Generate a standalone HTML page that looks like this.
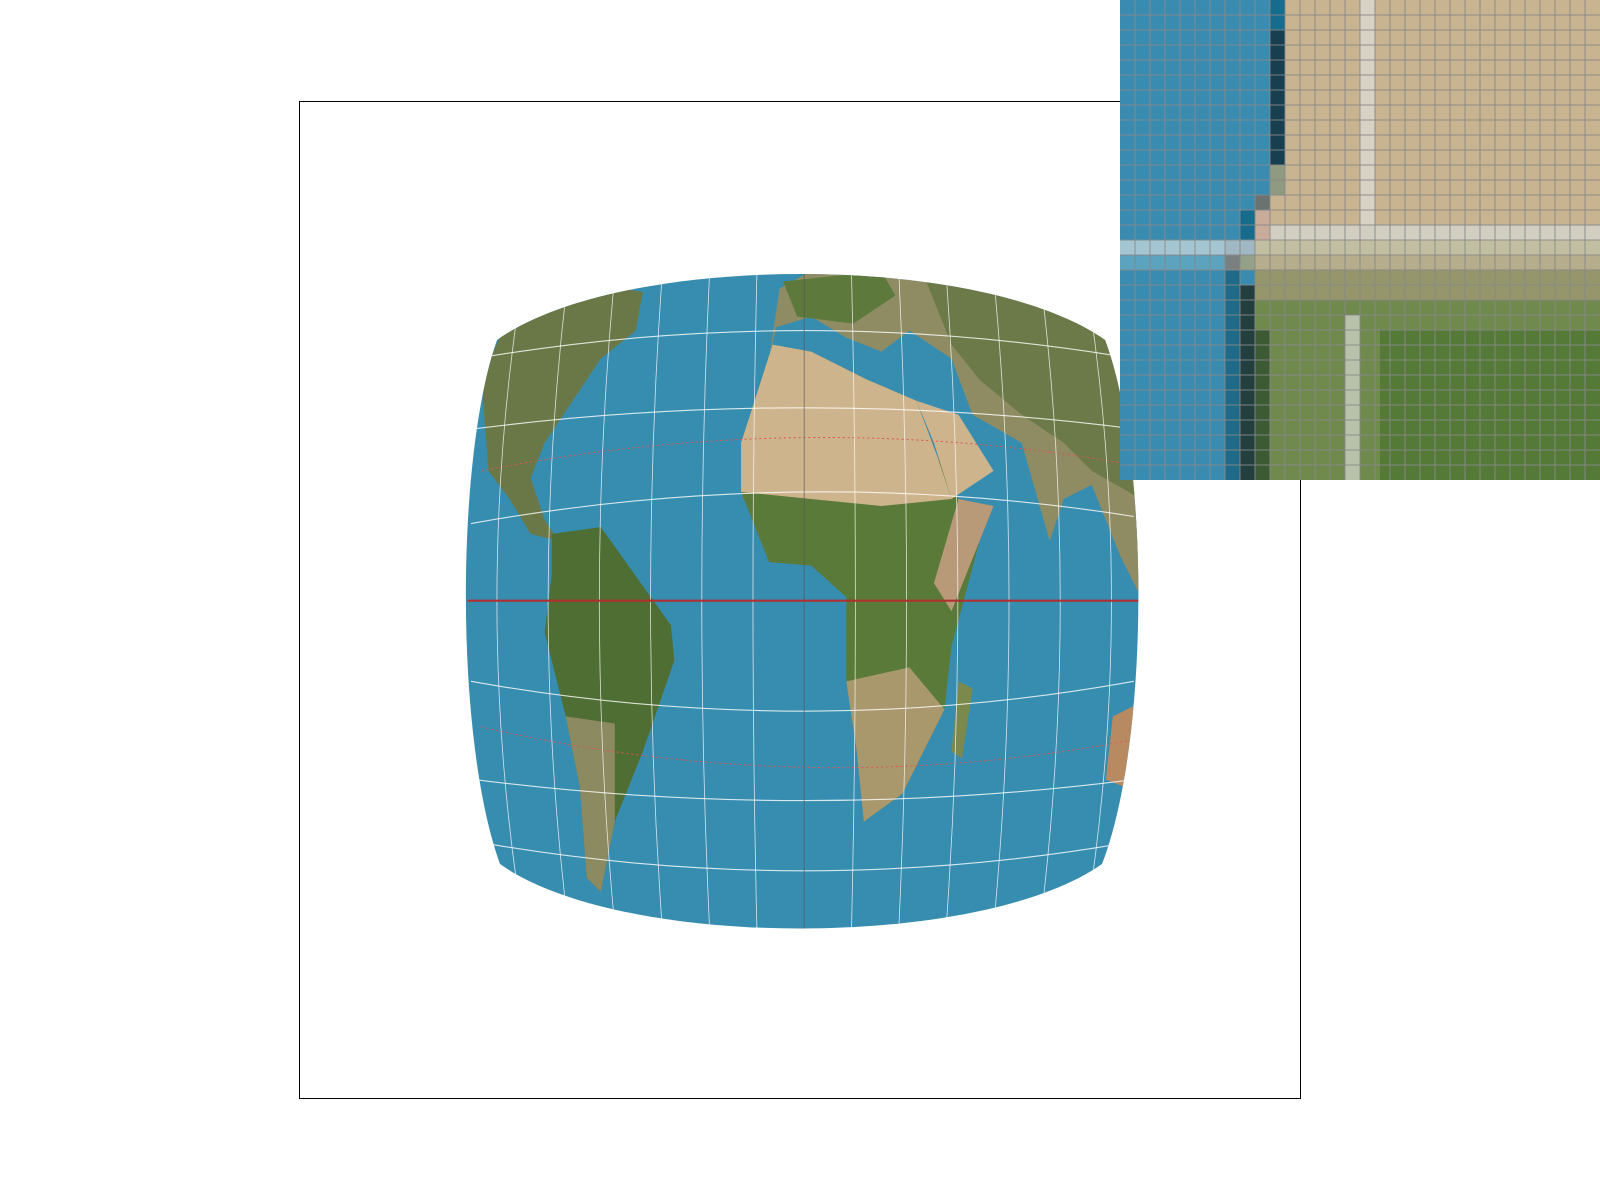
<!DOCTYPE html>
<html><head><meta charset="utf-8"><style>
html,body{margin:0;padding:0;background:#fff;width:1600px;height:1200px;overflow:hidden}
svg{display:block}
</style></head><body>
<svg width="1600" height="1200" viewBox="0 0 1600 1200" xmlns="http://www.w3.org/2000/svg">
<defs>
<clipPath id="g"><path d="M497,340 C620,252 980,252 1105,340 C1150,460 1150,740 1102,864 C980,950 620,950 500,864 C455,740 455,460 497,340 Z"/></clipPath>
</defs>
<rect x="299.5" y="101.5" width="1001" height="997" fill="none" stroke="#000" stroke-width="1"/>
<g clip-path="url(#g)">
<rect x="440" y="240" width="720" height="720" fill="#378db0"/>
<g transform="translate(250,50) scale(0.7015)">
<!-- Eurasia -->
<path d="M740,440 L750,395 L800,380 L850,410 L900,430 L940,400 L1000,440 L1030,520 L1100,560 L1140,700 L1160,640 L1200,620 L1240,720 L1270,780 L1270,300 L1100,320 L950,310 L800,315 L755,340 Z" fill="#8f8c64"/>
<path d="M960,320 L1270,300 L1270,640 L1200,600 L1160,560 L1100,520 L1040,470 L1000,420 Z" fill="#6b7a48"/>
<path d="M760,330 L900,315 L920,350 L860,390 L780,380 Z" fill="#5d7a3c"/>
<!-- Africa -->
<path d="M745,420 L700,560 L700,630 L740,730 L800,735 L850,780 L850,900 L870,1000 L875,1100 L930,1060 L990,940 L1000,850 L1040,700 L1060,650 L1010,640 L980,580 L950,500 L880,470 L800,430 Z" fill="#5a7a3a"/>
<path d="M745,420 L700,560 L700,630 L800,640 L900,650 L1000,640 L980,580 L950,500 L880,470 L800,430 Z" fill="#cdb48c"/>
<path d="M1010,640 L1060,650 L1040,700 L1000,800 L975,760 Z" fill="#b89a78"/>
<path d="M850,900 L940,880 L990,940 L930,1060 L875,1100 L865,1000 Z" fill="#a8986c"/>
<!-- Arabia -->
<path d="M950,500 L1010,520 L1060,600 L1000,640 L975,560 Z" fill="#cdb48c"/>
<path d="M1010,900 L1030,910 L1015,1010 L1000,1000 Z" fill="#7b8a4c"/>
<!-- North America -->
<path d="M330,470 L360,400 L420,360 L500,335 L560,345 L550,400 L500,440 L460,500 L420,560 L400,610 L420,670 L440,700 L400,690 L370,640 L340,600 Z" fill="#6a7848"/>
<!-- South America -->
<path d="M430,690 L500,680 L550,750 L600,820 L605,870 L560,1000 L520,1100 L500,1200 L480,1180 L470,1050 L450,950 L420,830 L430,750 Z" fill="#4f6e34"/>
<path d="M450,950 L520,960 L520,1100 L500,1200 L480,1180 L470,1050 Z" fill="#8c8a60"/>
<!-- Australia -->
<path d="M1230,950 L1270,930 L1270,1060 L1220,1040 Z" fill="#b88a62"/>
<!-- graticule parallels -->
<g fill="none" stroke="#fff" stroke-width="1.6" opacity="0.8">
<path d="M320,440 Q790,360 1260,440"/>
<path d="M320,540 Q790,480 1260,540"/>
<path d="M315,675 Q790,590 1260,665"/>
<path d="M315,900 Q790,985 1260,900"/>
<path d="M320,1040 Q790,1100 1260,1040"/>
<path d="M330,1130 Q790,1210 1250,1130"/>
</g>
<g fill="none" stroke="#d55" stroke-width="1.4" stroke-dasharray="3,4">
<path d="M330,600 Q790,510 1250,590"/>
<path d="M330,965 Q790,1070 1250,985"/>
</g>
<g fill="none" stroke="#fff" stroke-width="1.2" opacity="0.75">
<path d="M790,300 L790,1270" stroke="#555"/>
<path d="M723,300 Q711,785 723,1270"/><path d="M857,300 Q869,785 857,1270"/>
<path d="M656,300 Q632,785 656,1270"/><path d="M924,300 Q948,785 924,1270"/>
<path d="M589,300 Q553,785 589,1270"/><path d="M991,300 Q1027,785 991,1270"/>
<path d="M522,300 Q474,785 522,1270"/><path d="M1058,300 Q1106,785 1058,1270"/>
<path d="M455,310 Q395,785 455,1260"/><path d="M1125,310 Q1185,785 1125,1260"/>
<path d="M388,330 Q316,785 388,1240"/><path d="M1192,330 Q1264,785 1192,1240"/>
</g>
<path d="M310,785 L1270,785" stroke="#b03030" stroke-width="3"/>
</g>
</g>
<!-- inset -->
<g>
<rect x="1120" y="0" width="480" height="480" fill="#3a8bb0"/>
<path d="M1285,0 L1600,0 L1600,225 L1255,225 L1255,195 L1270,195 L1270,165 L1285,165 Z" fill="#c8b490"/>
<rect x="1270" y="0" width="15" height="165" fill="#173f50"/>
<rect x="1270" y="0" width="15" height="30" fill="#156c8c"/>
<rect x="1270" y="165" width="15" height="30" fill="#8f9a80"/>
<rect x="1255" y="195" width="15" height="15" fill="#6a7370"/>
<rect x="1240" y="210" width="15" height="30" fill="#156c8c"/>
<rect x="1255" y="210" width="15" height="30" fill="#c8ab98"/>
<rect x="1270" y="225" width="330" height="15" fill="#d2cfc2"/>
<rect x="1120" y="240" width="105" height="15" fill="#a3c6d2"/>
<rect x="1225" y="240" width="30" height="15" fill="#9fb8c4"/>
<rect x="1255" y="240" width="345" height="15" fill="#c2bea2"/>
<rect x="1120" y="255" width="105" height="15" fill="#5ba3be"/>
<rect x="1225" y="255" width="15" height="15" fill="#7a8080"/>
<rect x="1240" y="255" width="15" height="15" fill="#94a088"/>
<path d="M1255,255 L1600,255 L1600,270 L1255,270 Z" fill="#b5ad8c"/>
<path d="M1255,270 L1600,270 L1600,480 L1255,480 Z" fill="#6f8a4c"/>
<path d="M1255,270 L1600,270 L1600,300 L1255,300 Z" fill="#95966c"/>
<path d="M1380,330 L1600,330 L1600,480 L1380,480 Z" fill="#557a38"/>
<rect x="1225" y="270" width="15" height="210" fill="#1e6a88"/>
<rect x="1240" y="285" width="15" height="195" fill="#233e3f"/>
<rect x="1255" y="330" width="15" height="150" fill="#3c5a34"/>
<rect x="1345" y="315" width="15" height="165" fill="#b8c2aa"/>
<rect x="1360" y="0" width="15" height="225" fill="#d8d2c4"/>
<g stroke="#888" stroke-width="1" opacity="0.9">
<path d="M1135,0V480M1150,0V480M1165,0V480M1180,0V480M1195,0V480M1210,0V480M1225,0V480M1240,0V480M1255,0V480M1270,0V480M1285,0V480M1300,0V480M1315,0V480M1330,0V480M1345,0V480M1360,0V480M1375,0V480M1390,0V480M1405,0V480M1420,0V480M1435,0V480M1450,0V480M1465,0V480M1480,0V480M1495,0V480M1510,0V480M1525,0V480M1540,0V480M1555,0V480M1570,0V480M1585,0V480"/>
<path d="M1120,15H1600M1120,30H1600M1120,45H1600M1120,60H1600M1120,75H1600M1120,90H1600M1120,105H1600M1120,120H1600M1120,135H1600M1120,150H1600M1120,165H1600M1120,180H1600M1120,195H1600M1120,210H1600M1120,225H1600M1120,240H1600M1120,255H1600M1120,270H1600M1120,285H1600M1120,300H1600M1120,315H1600M1120,330H1600M1120,345H1600M1120,360H1600M1120,375H1600M1120,390H1600M1120,405H1600M1120,420H1600M1120,435H1600M1120,450H1600M1120,465H1600"/>
</g>
</g>
</svg>
</body></html>
